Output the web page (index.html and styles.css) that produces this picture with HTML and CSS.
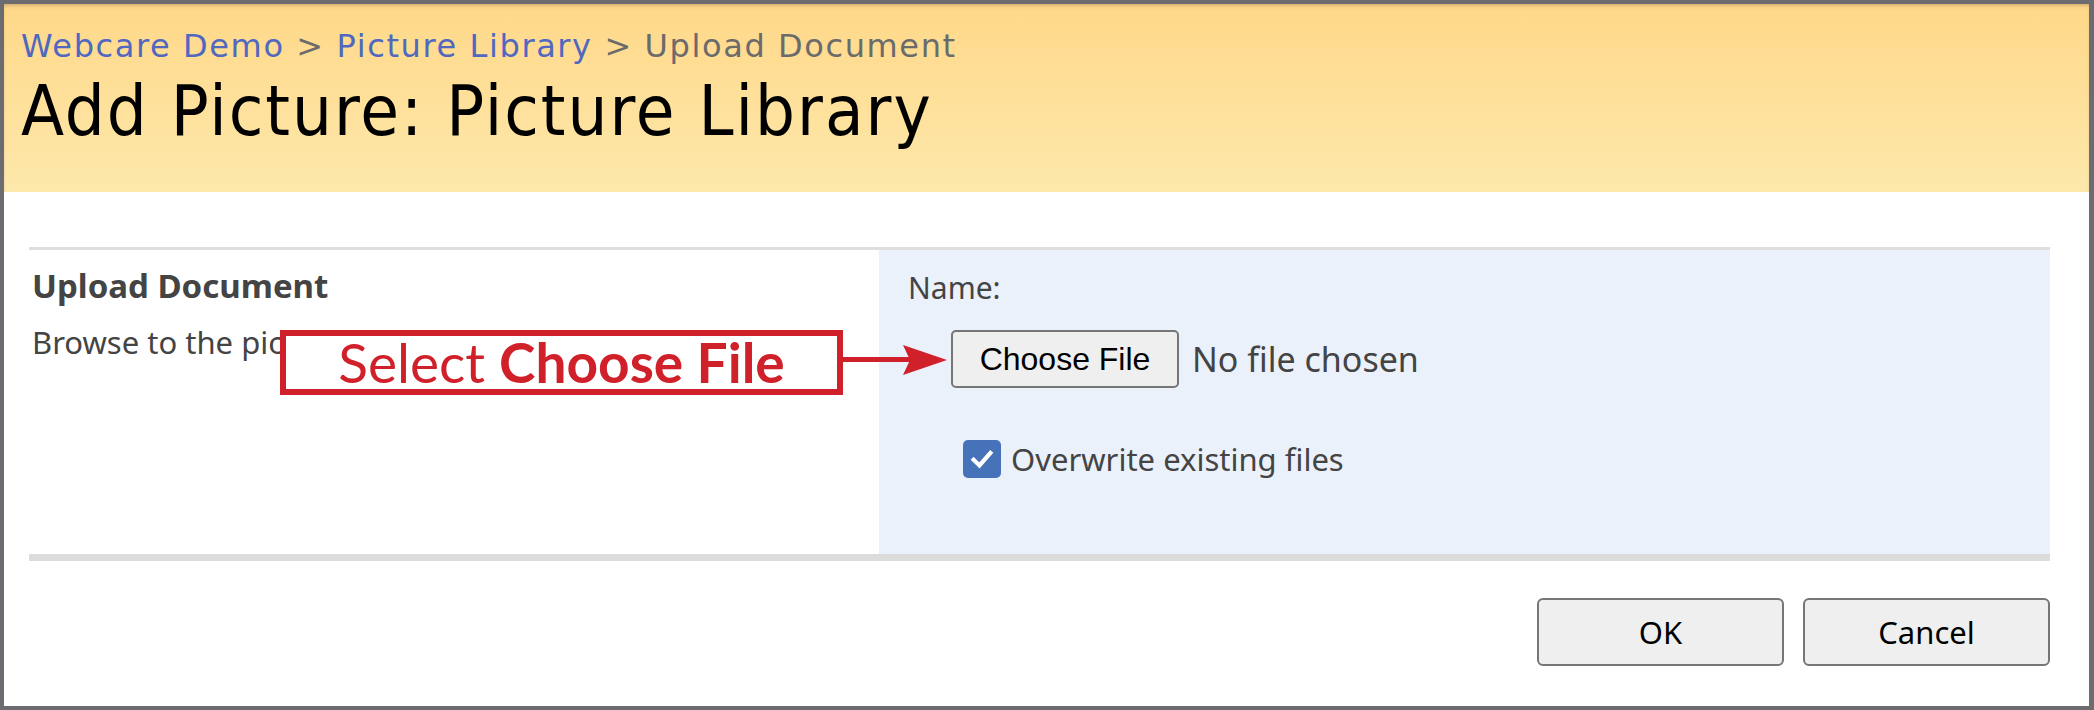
FILE: index.html
```html
<!DOCTYPE html>
<html lang="en">
<head>
    <meta charset="UTF-8">
    <meta name="viewport" content="width=device-width, initial-scale=1.0">
    <link rel="stylesheet" href="styles.css">
    <title>Add Picture: Picture Library</title>
</head>
<body>
    <div class="frame">
        <div class="header">
            <div class="breadcrumb">
                <a href="#">Webcare Demo</a> &gt; <a href="#">Picture Library</a> &gt; Upload Document
            </div>
            <h1>Add Picture: Picture Library</h1>
        </div>

        <div class="main">
            <div class="form-table">
                <div class="section-info">
                    <h3>Upload Document</h3>
                    <p>Browse to the picture you intend to upload.</p>
                </div>
                <div class="section-field">
                    <div class="field-label">Name:</div>
                    <div class="file-row">
                        <button class="file-btn">Choose File</button>
                        <span class="file-status">No file chosen</span>
                    </div>
                    <label class="overwrite">
                        <span class="checkbox">
                            <svg viewBox="0 0 20 20" width="28" height="28">
                                <path d="M4 10.5 L8.2 14.6 L16 5.6" fill="none" stroke="#fff" stroke-width="3" stroke-linecap="square"/>
                            </svg>
                        </span>
                        Overwrite existing files
                    </label>
                </div>
            </div>

            <div class="actions">
                <button class="action-btn">OK</button>
                <button class="action-btn">Cancel</button>
            </div>

            <!-- annotation overlay -->
            <div class="callout">Select <b>Choose File</b></div>
            <div class="callout-arrow">
                <svg width="110" height="36" viewBox="0 0 110 36">
                    <rect x="0" y="15" width="70" height="5" fill="#d0202a"/>
                    <polygon points="60,3 104,18 60,33 67,18" fill="#d0202a"/>
                </svg>
            </div>
        </div>
    </div>
</body>
</html>
```

FILE: styles.css
```css
body {
    margin: 0;
    background-color: #fff;
    font-family: 'Noto Sans', 'Open Sans', sans-serif;
}

.frame {
    height: 710px;
    box-sizing: border-box;
    border: 4px solid #6b6b70;
    border-right-width: 5px;
}

.header {
    height: 188px;
    box-sizing: border-box;
    padding: 22px 0 0 17px;
    background: linear-gradient(to bottom, #ffd889, #fde8ab);
    box-shadow: inset 0 3px 4px -2px rgba(0, 0, 0, 0.25);
}

.breadcrumb {
    font-family: 'DejaVu Sans', sans-serif;
    font-size: 32px;
    letter-spacing: 1.6px;
    color: #6b6b6b;
    line-height: 40px;
}

.breadcrumb a {
    color: #5068c0;
    text-decoration: none;
}

h1 {
    margin: 2px 0 0;
    font-family: 'DejaVu Sans Condensed', 'DejaVu Sans', sans-serif;
    font-weight: normal;
    font-size: 70px;
    letter-spacing: 2px;
    line-height: 86px;
    color: #000;
}

.main {
    position: relative;
    padding: 55px 39px 0 25px;
}

.form-table {
    display: grid;
    grid-template-columns: 850px 1fr;
    border-top: 3px solid #dedede;
    border-bottom: 7px solid #dcdcdc;
    height: 314px;
    box-sizing: border-box;
}

.section-info {
    padding: 14px 0 0 3px;
    color: #444;
}

.section-info h3 {
    margin: 0;
    font-size: 33px;
    font-weight: bold;
    line-height: 44px;
}

.section-info p {
    margin: 12px 0 0;
    font-size: 31px;
    line-height: 44px;
}

.section-field {
    background-color: #eaf1fa;
    padding: 18px 0 0 29px;
    color: #444;
    font-size: 30px;
}

.field-label {
    line-height: 40px;
}

.file-row {
    display: flex;
    align-items: center;
    margin: 22px 0 0 43px;
}

.file-btn {
    font-family: 'Liberation Sans', Arial, sans-serif;
    font-size: 32px;
    height: 58px;
    width: 228px;
    padding: 0;
    color: #000;
    background-color: #efefef;
    border: 2px solid #767676;
    border-radius: 5px;
}

.file-status {
    margin-left: 13px;
    font-size: 34px;
}

.overwrite {
    display: flex;
    align-items: center;
    margin: 50px 0 0 55px;
    font-size: 31px;
}

.checkbox {
    display: flex;
    align-items: center;
    justify-content: center;
    width: 38px;
    height: 38px;
    margin-right: 10px;
    border-radius: 5px;
    background-color: #4672b9;
}

.actions {
    display: flex;
    justify-content: flex-end;
    gap: 19px;
    margin-top: 37px;
}

.action-btn {
    width: 247px;
    height: 68px;
    font-family: 'Noto Sans', sans-serif;
    font-size: 31px;
    color: #000;
    background-color: #efefef;
    border: 2px solid #767676;
    border-radius: 6px;
}

.callout {
    position: absolute;
    left: 276px;
    top: 138px;
    width: 563px;
    height: 65px;
    box-sizing: border-box;
    border: 6px solid #d0202a;
    background-color: #fff;
    color: #d0202a;
    font-family: 'Lato', sans-serif;
    font-size: 55px;
    line-height: 52px;
    text-align: center;
}

.callout b {
    font-weight: bold;
}

.callout-arrow {
    position: absolute;
    left: 839px;
    top: 150px;
    line-height: 0;
}
```
